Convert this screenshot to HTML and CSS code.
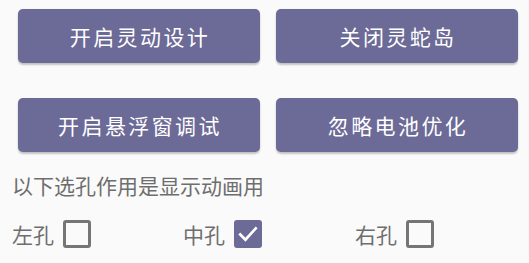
FILE: index.html
```html
<!DOCTYPE html>
<html lang="zh-CN">
<head>
<meta charset="utf-8">
<link rel="stylesheet" href="styles.css">
</head>
<body>
<div class="page">
  <div class="buttons">
    <div class="btn">开启灵动设计</div>
    <div class="btn">关闭灵蛇岛</div>
    <div class="btn">开启悬浮窗调试</div>
    <div class="btn">忽略电池优化</div>
  </div>
  <div class="desc">以下选孔作用是显示动画用</div>
  <div class="checks">
    <div class="check"><span class="label">左孔</span><span class="box"></span></div>
    <div class="check"><span class="label">中孔</span><span class="box on"><svg viewBox="0 0 27 27" width="27" height="27"><path d="M6 14 L11 19 L21 8" fill="none" stroke="#fff" stroke-width="2.6" stroke-linecap="square"/></svg></span></div>
    <div class="check"><span class="label">右孔</span><span class="box"></span></div>
  </div>
</div>
</body>
</html>
```
FILE: styles.css
```css
html, body {
  margin: 0;
  padding: 0;
  background: #fafafa;
}
body {
  font-family: "Noto Sans CJK SC", "Noto Sans", sans-serif;
  width: 529px;
  height: 263px;
  overflow: hidden;
}
.page {
  padding: 9px 11px 0 18px;
}
.buttons {
  display: grid;
  grid-template-columns: 242px 242px;
  column-gap: 16px;
  row-gap: 35px;
}
.btn {
  height: 54px;
  background: #6c6a97;
  color: #fff;
  border-radius: 5px;
  box-shadow: 0 2px 2px rgba(0,0,0,0.22), 0 0 1px rgba(0,0,0,0.12);
  display: flex;
  align-items: center;
  justify-content: center;
  font-size: 21px;
  letter-spacing: 2.4px;
  padding-left: 2px;
  box-sizing: border-box;
}
.desc {
  margin: 18px 0 0 -6px;
  font-size: 21px;
  line-height: 30px;
  color: #6e6e6e;
}
.checks {
  display: grid;
  grid-template-columns: 171px 172px 171px;
  margin: 19px 0 0 -6px;
  height: 30px;
}
.check {
  display: flex;
  align-items: center;
}
.label {
  font-size: 21px;
  line-height: 30px;
  color: #6e6e6e;
  width: 51px;
}
.box {
  width: 28px;
  height: 28px;
  box-sizing: border-box;
  border: 3px solid #757575;
  border-radius: 3px;
  display: block;
  position: relative;
}
.box.on {
  background: #6c6a97;
  border-color: #6c6a97;
}
.box.on svg {
  position: absolute;
  left: -3px;
  top: -3px;
  width: 28px;
  height: 28px;
}
```
